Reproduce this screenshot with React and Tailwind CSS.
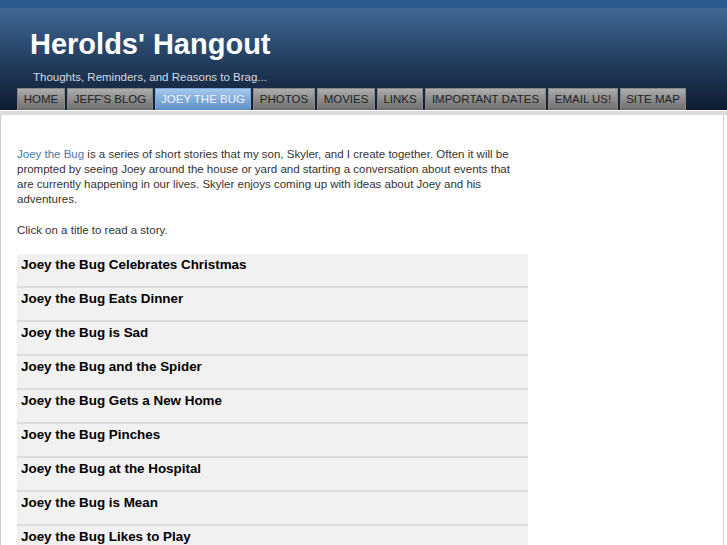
import React from "react";

const tabs = [
  { label: "HOME", w: "w-[48px]" },
  { label: "JEFF'S BLOG", w: "w-[86px]" },
  { label: "JOEY THE BUG", w: "w-[96px]", active: true },
  { label: "PHOTOS", w: "w-[62px]" },
  { label: "MOVIES", w: "w-[58px]" },
  { label: "LINKS", w: "w-[46px]" },
  { label: "IMPORTANT DATES", w: "w-[121px]" },
  { label: "EMAIL US!", w: "w-[70px]" },
  { label: "SITE MAP", w: "w-[66px]" },
];

const stories = [
  "Joey the Bug Celebrates Christmas",
  "Joey the Bug Eats Dinner",
  "Joey the Bug is Sad",
  "Joey the Bug and the Spider",
  "Joey the Bug Gets a New Home",
  "Joey the Bug Pinches",
  "Joey the Bug at the Hospital",
  "Joey the Bug is Mean",
  "Joey the Bug Likes to Play",
];

export default function App() {
  return (
    <div className="h-[545px] overflow-hidden bg-white font-['Liberation_Sans',Arial,sans-serif]">
      {/* Header */}
      <div className="border-t-[8px] border-[#2c5a8c] bg-gradient-to-b from-[#3e6993] via-[#243f62] to-[#0f1d31] h-[110px] flex flex-col">
        <h1 className="pl-[30px] pt-[19px] text-[29px] leading-[34px] font-bold text-white">
          Herolds' Hangout
        </h1>
        <p className="pl-[33px] pt-[9px] text-[11.5px] leading-[14px] text-[#d3dae4]">
          Thoughts, Reminders, and Reasons to Brag...
        </p>
        {/* Nav tabs */}
        <div className="mt-auto flex gap-[2px] pl-[17px]">
          {tabs.map((t) => (
            <div
              key={t.label}
              className={`${t.w} h-[22px] flex items-center justify-center text-[11.5px] border border-b-0 ${
                t.active
                  ? "bg-gradient-to-b from-[#a4c9ef] to-[#5d8ec6] border-[#7da6d3] text-[#eef4fb]"
                  : "bg-gradient-to-b from-[#adadad] to-[#6c6c6c] border-[#858585] text-[#222]"
              }`}
            >
              {t.label}
            </div>
          ))}
        </div>
      </div>

      <div className="h-[5px] bg-[#dcdcdc] border-t border-white"></div>

      {/* Content */}
      <div className="mr-[3px] h-full border-l border-r border-[#cccccc] px-4 pt-[32px]">
        <p className="text-[11.5px] leading-[15px] text-[#333] w-[505px]">
          <a href="#" className="text-[#4a77ad]">
            Joey the Bug
          </a>{" "}
          is a series of short stories that my son, Skyler, and I create together. Often it will be
          prompted by seeing Joey around the house or yard and starting a conversation about events that
          are currently happening in our lives. Skyler enjoys coming up with ideas about Joey and his
          adventures.
        </p>
        <p className="mt-4 text-[11.5px] leading-[15px] text-[#333]">Click on a title to read a story.</p>

        <ul className="mt-4 w-[511px]">
          {stories.map((s) => (
            <li
              key={s}
              className="h-[34px] bg-[#f1f1f1] border-b-2 border-[#dddddd] px-[4px] pt-[2px] text-[13.4px] leading-[17px] font-bold text-black"
            >
              {s}
            </li>
          ))}
        </ul>
      </div>
    </div>
  );
}
